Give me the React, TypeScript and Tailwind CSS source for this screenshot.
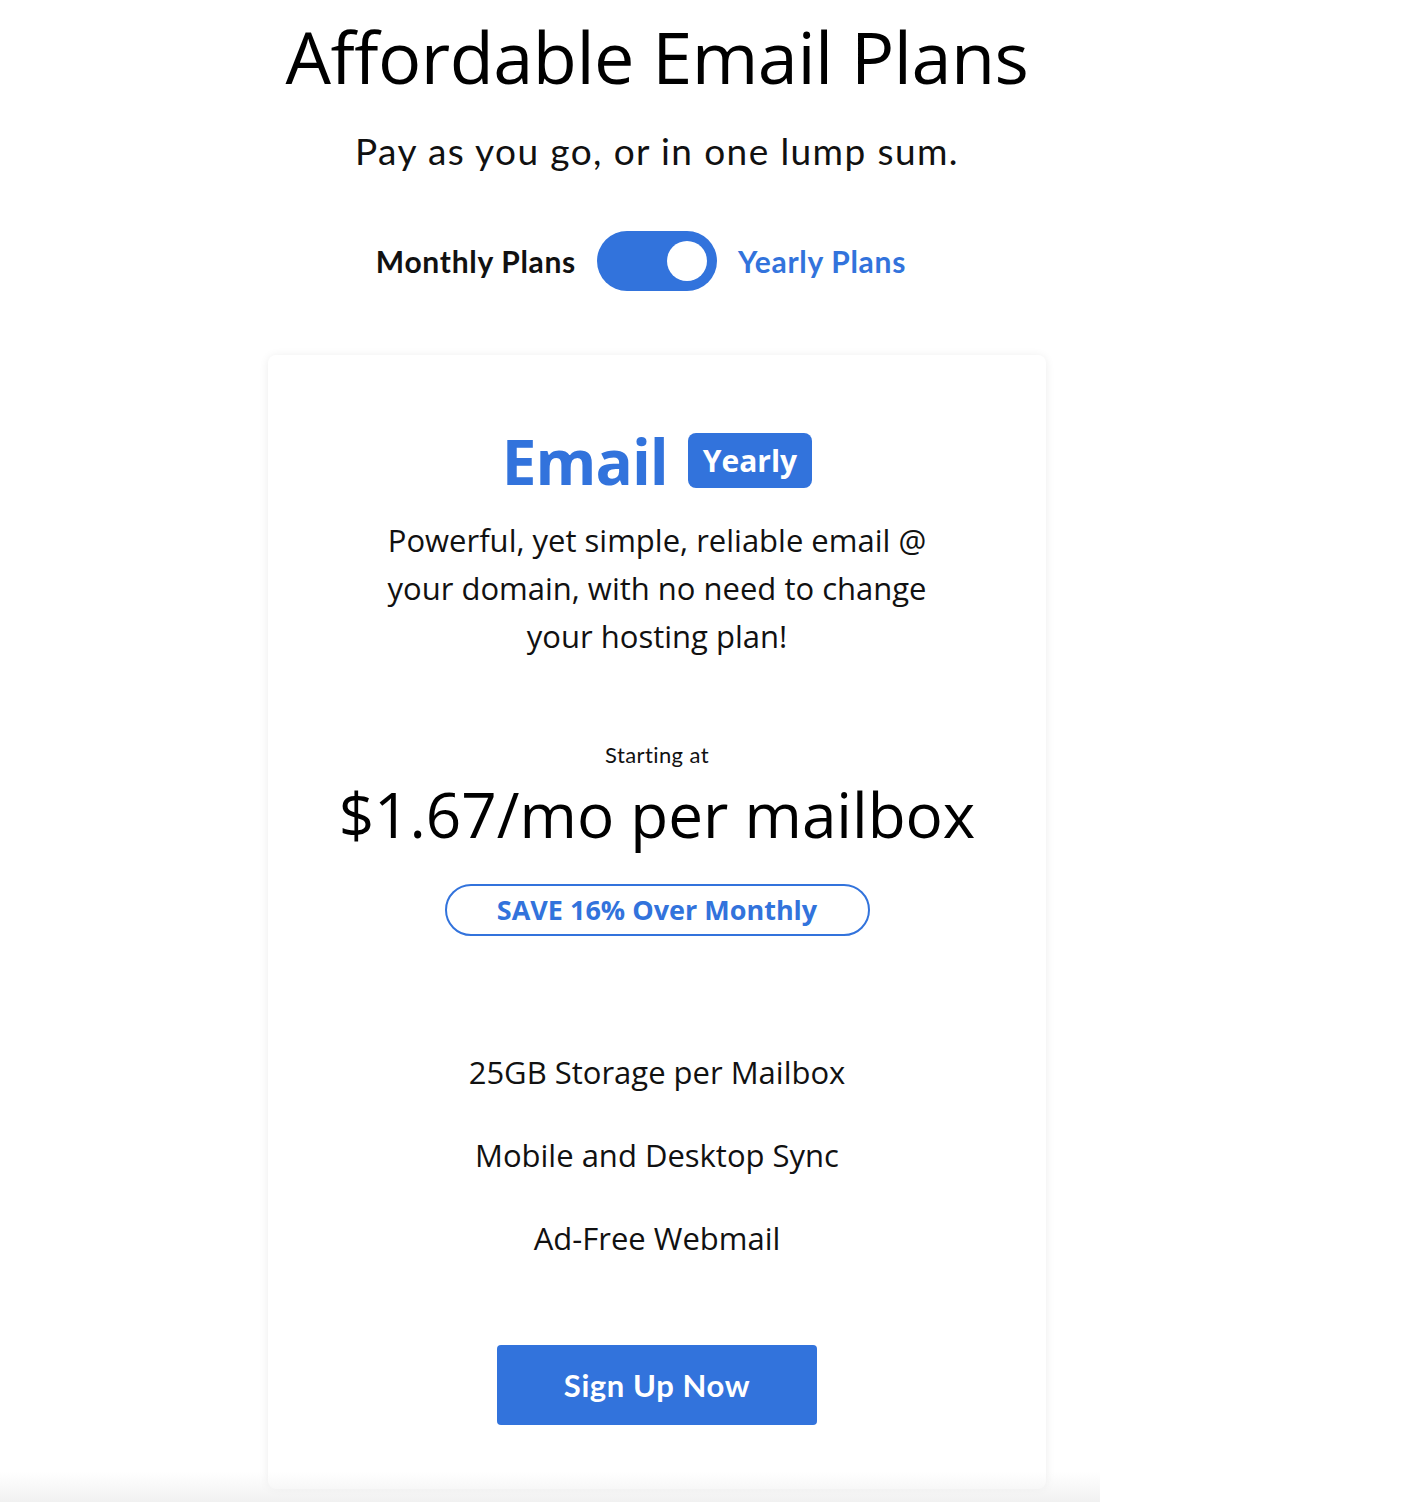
import React, { useState } from 'react';

const features = ['25GB Storage per Mailbox', 'Mobile and Desktop Sync', 'Ad-Free Webmail'];

export default function App() {
  const [yearly, setYearly] = useState(true);

  return (
    <div className="min-h-screen bg-white text-black relative overflow-hidden">
      <div className="w-[778px] ml-[268px] pt-[12px] flex flex-col items-center">

        {/* Heading */}
        <h1 className="font-['Open_Sans',sans-serif] text-[72px] leading-[88px] font-normal tracking-[-0.5px] whitespace-nowrap">
          Affordable Email Plans
        </h1>
        <p className="mt-[29px] font-['Lato',sans-serif] text-[37px] leading-[44px] tracking-[1.4px] text-[#111]">
          Pay as you go, or in one lump sum.
        </p>

        {/* Billing switch */}
        <div className="mt-[58px] w-full grid grid-cols-[1fr_auto_1fr] items-center gap-[21px]">
          <span className="justify-self-end font-['Lato',sans-serif] font-bold text-[30px] tracking-[0.7px] text-[#111]">Monthly Plans</span>
          <button
            onClick={() => setYearly(!yearly)}
            className={`w-[120px] h-[60px] rounded-full bg-[#3273dc] flex items-center px-[10px] ${yearly ? 'justify-end' : 'justify-start'}`}
          >
            <span className="w-[40px] h-[40px] rounded-full bg-white block" />
          </button>
          <span className="justify-self-start font-['Lato',sans-serif] font-bold text-[30px] tracking-[0.7px] text-[#3273dc]">Yearly Plans</span>
        </div>

        {/* Plan card */}
        <div className="mt-[64px] w-full bg-white rounded-lg shadow-[0_1px_10px_rgba(0,0,0,0.08)] pt-[78px] pb-[64px] flex flex-col items-center">
          <div className="h-[55px] flex items-center gap-[20px]">
            <span className="font-['Open_Sans',sans-serif] font-bold text-[62px] leading-none text-[#3273dc] tracking-[-1px]">Email</span>
            <span className="h-[55px] px-[15px] rounded-lg bg-[#3273dc] text-white font-['Open_Sans',sans-serif] font-bold text-[30px] flex items-center">
              Yearly
            </span>
          </div>

          <p className="mt-[28px] w-[570px] text-center font-['Open_Sans',sans-serif] text-[31px] leading-[48px] text-[#111]">
            Powerful, yet simple, reliable email @ your domain, with no need to change your hosting plan!
          </p>

          <p className="mt-[83px] font-['Lato',sans-serif] text-[22px] leading-[24px] tracking-[0.4px] text-[#111]">Starting at</p>
          <p className="mt-[11px] font-['Open_Sans',sans-serif] text-[62px] leading-[72px] whitespace-nowrap">
            $1.67/mo per mailbox
          </p>

          <div className="mt-[34px] w-[425px] h-[52px] border-2 border-[#3273dc] rounded-full flex items-center justify-center">
            <span className="font-['Open_Sans',sans-serif] font-bold text-[27px] text-[#3273dc]">SAVE 16% Over Monthly</span>
          </div>

          <ul className="mt-[116px] flex flex-col items-center gap-[43px]">
            {features.map((f) => (
              <li key={f} className="font-['Open_Sans',sans-serif] text-[31px] leading-[40px] text-[#111]">{f}</li>
            ))}
          </ul>

          <button className="mt-[87px] w-[320px] h-[80px] rounded bg-[#3273dc] text-white font-['Lato',sans-serif] font-bold text-[31px] tracking-[0.6px]">
            Sign Up Now
          </button>
        </div>
      </div>

      {/* faint fade at the page bottom */}
      <div className="absolute left-0 bottom-0 w-[1100px] h-[30px] bg-gradient-to-b from-transparent to-[#f1f1f1] pointer-events-none" />
    </div>
  );
}
